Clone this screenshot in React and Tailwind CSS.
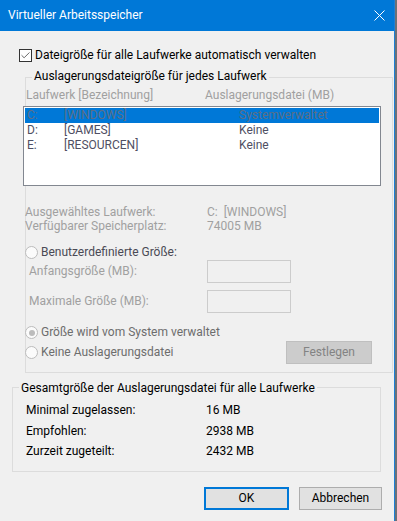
import { Check } from "lucide-react";

function Radio({ checked = false, label, dark = false }) {
  return (
    <div className="flex items-center gap-[3px]">
      <span className="grid h-[13px] w-[13px] place-items-center rounded-full border border-[#bcbcbc] bg-[#fbfbfb]">
        {checked ? <span className="h-[6px] w-[6px] rounded-full bg-[#bcbcbc]" /> : null}
      </span>
      <span className={dark ? "text-[#4a4a55]" : "text-[#6d6d6d]"}>{label}</span>
    </div>
  );
}

function GroupLegend({ children, className = "" }) {
  return (
    <span className={`ml-[6px] w-fit bg-[#f0f0f0] px-[2px] text-black ${className}`}>
      {children}
    </span>
  );
}

const drives = [
  { letter: "C:", label: "[WINDOWS]", size: "Systemverwaltet", selected: true },
  { letter: "D:", label: "[GAMES]", size: "Keine" },
  { letter: "E:", label: "[RESOURCEN]", size: "Keine" },
];

const totals = [
  ["Minimal zugelassen:", "16 MB"],
  ["Empfohlen:", "2938 MB"],
  ["Zurzeit zugeteilt:", "2432 MB"],
];

export default function App() {
  return (
    <div className="flex h-[521px] w-[397px] bg-[#6c7077] font-['Roboto',sans-serif] text-[12px] leading-[15px]">
      <div className="flex h-full w-[395px] flex-col border-r border-[#1c7fd6] bg-[#f0f0f0]">
        {/* title bar */}
        <div className="flex h-[31px] shrink-0 items-center justify-between bg-[#0078d7] pl-[8px] pr-[9px] text-white">
          <span>Virtueller Arbeitsspeicher</span>
          <svg width="11" height="11" viewBox="0 0 11 11" fill="none" stroke="white" strokeWidth="1">
            <path d="M0.5 0.5 L10.5 10.5 M10.5 0.5 L0.5 10.5" />
          </svg>
        </div>

        {/* auto checkbox */}
        <label className="mt-[17px] flex items-center gap-[3px] pl-[19px] text-black">
          <span className="grid h-[13px] w-[13px] place-items-center border border-[#333333] bg-white">
            <Check className="h-[11px] w-[11px] text-[#333333]" strokeWidth={1.6} />
          </span>
          Dateigröße für alle Laufwerke automatisch verwalten
        </label>

        {/* per-drive group */}
        <div className="ml-[25px] mt-[14px] flex h-[296px] w-[368px] flex-col border border-[#dcdcdc]">
          <GroupLegend className="-mt-[9px]">Auslagerungsdateigröße für jedes Laufwerk</GroupLegend>

          <div className="mt-[4px] grid grid-cols-[179px_1fr] text-[#a0a0a0]">
            <span>Laufwerk [Bezeichnung]</span>
            <span>Auslagerungsdatei (MB)</span>
          </div>

          <div className="-ml-[3px] mt-[3px] h-[80px] w-[358px] border border-[#828790] bg-white p-[1px]">
            {drives.map((d) => (
              <div
                key={d.letter}
                className={`grid h-[15px] grid-cols-[37px_175px_1fr] pl-[2px] ${
                  d.selected ? "bg-[#0078d7] text-[#5d6e84]" : "text-[#4f4f63]"
                }`}
              >
                <span>{d.letter}</span>
                <span>{d.label}</span>
                <span>{d.size}</span>
              </div>
            ))}
          </div>

          <div className="-ml-[1px] mt-[19px] grid grid-cols-[182px_1fr] leading-[14px] text-[#a0a0a0]">
            <span>Ausgewähltes Laufwerk:</span>
            <span>C:&nbsp;&nbsp;[WINDOWS]</span>
            <span>Verfügbarer Speicherplatz:</span>
            <span>74005 MB</span>
          </div>

          <div className="-ml-[1px] mt-[12px]">
            <Radio label="Benutzerdefinierte Größe:" dark />
          </div>

          <div className="ml-[3px] flex h-[23px] items-center text-[#a0a0a0]">
            <span className="w-[178px]">Anfangsgröße (MB):</span>
            <span className="h-[23px] w-[84px] border border-[#cccccc] bg-[#f0f0f0]" />
          </div>
          <div className="ml-[3px] mt-[7px] flex h-[23px] items-center text-[#a0a0a0]">
            <span className="w-[178px]">Maximale Größe (MB):</span>
            <span className="h-[23px] w-[84px] border border-[#cccccc] bg-[#f0f0f0]" />
          </div>

          <div className="-ml-[1px] mt-[12px]">
            <Radio label="Größe wird vom System verwaltet" checked />
          </div>
          <div className="-ml-[1px] mt-[1px] flex h-[23px] items-center">
            <Radio label="Keine Auslagerungsdatei" />
            <button
              type="button"
              disabled
              className="ml-auto mr-[20px] h-[23px] w-[86px] border border-[#bfbfbf] bg-[#cccccc] text-[#838383]"
            >
              Festlegen
            </button>
          </div>
        </div>

        {/* totals group */}
        <div className="ml-[12px] mt-[14px] flex h-[85px] w-[369px] flex-col border border-[#dcdcdc]">
          <GroupLegend className="-mt-[7px]">Gesamtgröße der Auslagerungsdatei für alle Laufwerke</GroupLegend>
          <div className="mt-[7px] flex flex-col gap-[5.5px] pl-[13px] text-black">
            {totals.map(([k, v]) => (
              <div key={k} className="grid grid-cols-[180px_1fr]">
                <span>{k}</span>
                <span>{v}</span>
              </div>
            ))}
          </div>
        </div>

        {/* dialog buttons */}
        <div className="mt-[15px] flex justify-end gap-[10px] pr-[12px] text-black">
          <button type="button" className="h-[23px] w-[85px] border-2 border-[#0078d7] bg-[#e1e1e1]">
            OK
          </button>
          <button type="button" className="h-[23px] w-[83px] border border-[#adadad] bg-[#e1e1e1]">
            Abbrechen
          </button>
        </div>
      </div>
      <div className="w-[2px] bg-[#6c7077]" />
    </div>
  );
}
